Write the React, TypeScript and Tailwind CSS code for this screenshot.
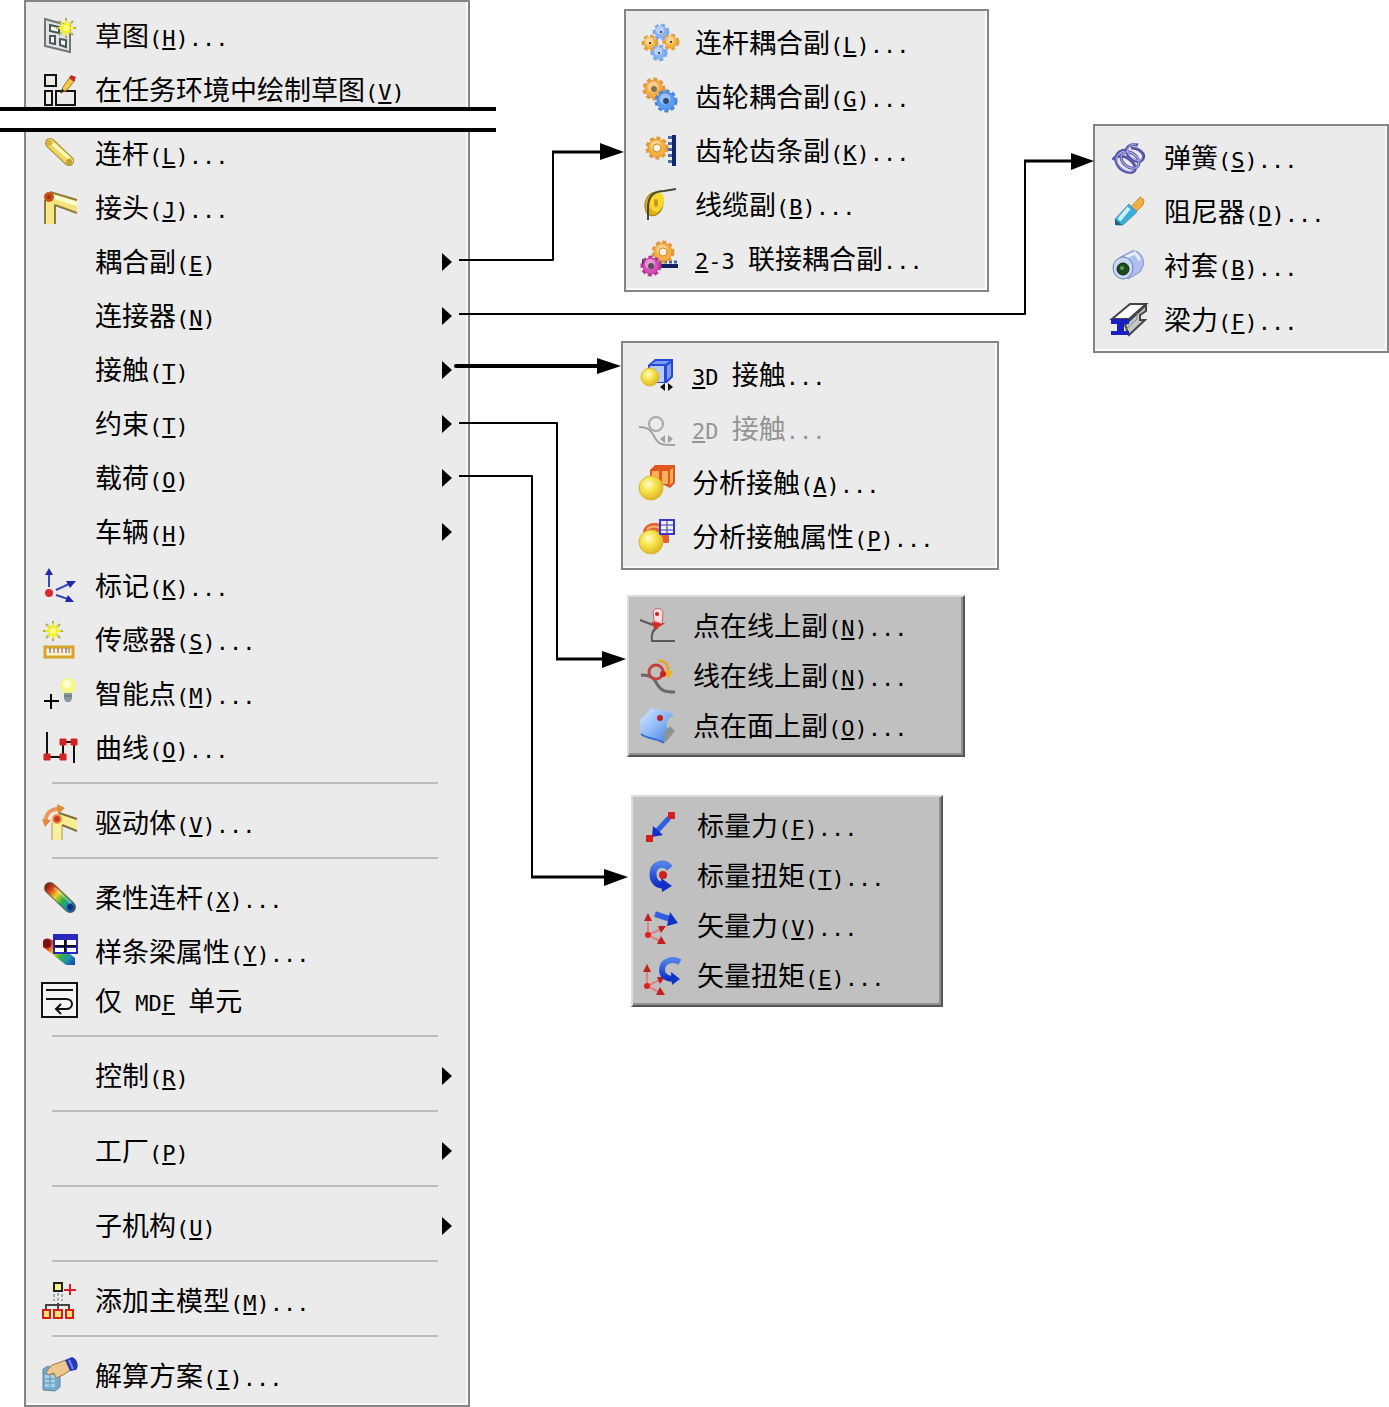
import type { ReactNode } from "react";
import clsx from "clsx";

interface MenuEntry {
  label: string; // "&" marks the access key
  icon?: ReactNode;
  submenu?: boolean;
  disabled?: boolean;
  tight?: boolean;
}

type MenuNode = MenuEntry | "separator";

/* ---------- icon parts ---------- */

const Icon = ({ children }: { children: ReactNode }) => (
  <svg viewBox="0 0 36 36" className="w-9 h-9 overflow-visible" fill="none" aria-hidden="true">
    {children}
  </svg>
);

const Gear = ({ x, y, r, fill, edge }: { x: number; y: number; r: number; fill: string; edge: string }) => (
  <g>
    <circle cx={x} cy={y} r={r - 1} stroke={edge} strokeWidth="3" strokeDasharray="4 2.6" />
    <circle cx={x} cy={y} r={r - 2} fill={fill} stroke={edge} strokeWidth="1" />
    <circle cx={x - 1} cy={y - 2} r={r / 2} fill="#fff" opacity="0.4" />
  </g>
);

const Star = ({ x, y }: { x: number; y: number }) => (
  <g transform={`translate(${x} ${y})`}>
    <path d="M0-10V10M-10 0H10M-7-7L7 7M-7 7L7-7" stroke="#a4a84c" strokeWidth="2" />
    <path d="M0-9L2-4L6-6L4-2L9 0L4 2L6 6L2 4L0 9L-2 4L-6 6L-4 2L-9 0L-4-2L-6-6L-2-4Z" fill="#f4f020" />
    <circle r="3" fill="#fffb90" />
  </g>
);

const Ball = ({ x, y, r }: { x: number; y: number; r: number }) => (
  <circle cx={x} cy={y} r={r} fill="url(#ball)" stroke="#d8b838" strokeWidth="1" />
);

const Axes = () => (
  <g>
    <path d="M4 22V7M4 22L17 16M4 22L16 28" stroke="#e08080" strokeWidth="2" />
    <path d="M4 0L8 8H0ZM22 13L17 20L14 13ZM22 31L13 31L17 23Z" fill="#c02020" />
    <circle cx="4" cy="22" r="3" fill="#e02020" />
  </g>
);

const Gradients = () => (
  <svg className="absolute w-0 h-0" aria-hidden="true">
    <defs>
      <radialGradient id="ball" cx="0.4" cy="0.35" r="0.7">
        <stop offset="0" stopColor="#fffbd0" />
        <stop offset="0.4" stopColor="#f7e650" />
        <stop offset="1" stopColor="#dcb020" />
      </radialGradient>
      <linearGradient id="rainbow" gradientUnits="userSpaceOnUse" x1="4" y1="6" x2="32" y2="30">
        <stop offset="0" stopColor="#8c1010" />
        <stop offset="0.2" stopColor="#e05020" />
        <stop offset="0.38" stopColor="#f0d030" />
        <stop offset="0.6" stopColor="#30b040" />
        <stop offset="0.8" stopColor="#2090b0" />
        <stop offset="1" stopColor="#2040a0" />
      </linearGradient>
      <linearGradient id="sheet" x1="0" y1="0" x2="1" y2="1">
        <stop offset="0" stopColor="#dceaff" />
        <stop offset="0.5" stopColor="#8db8f8" />
        <stop offset="1" stopColor="#3d78d8" />
      </linearGradient>
      <linearGradient id="blueArrow" x1="0" y1="0" x2="0" y2="1">
        <stop offset="0" stopColor="#5080e8" />
        <stop offset="1" stopColor="#1030c8" />
      </linearGradient>
    </defs>
  </svg>
);

/* ---------- icons ---------- */

const icons = {
  sketch: (
    <Icon>
      <path d="M3 1L28 8V34L3 28Z" fill="#dfe3e3" stroke="#6f7678" strokeWidth="2" />
      <path d="M8 7L17 9V15L8 13ZM8 18H13V26L8 25ZM18 21L24 22V29L18 27Z" fill="#f4f6f6" stroke="#4c5456" strokeWidth="2" />
      <Star x={24} y={10} />
    </Icon>
  ),
  sketchTask: (
    <Icon>
      <path d="M3 3H14V14H3ZM3 19H10V33H3ZM14 19H33V33H14Z" stroke="#111" strokeWidth="2" />
      <path d="M19 21L21 15L28 5L33 8L25 18Z" fill="#f0c848" stroke="#b07818" strokeWidth="1" />
      <path d="M27 6L29 3L34 5L32 10Z" fill="#c03020" />
      <path d="M18 21L20 17L23 19Z" fill="#222" />
    </Icon>
  ),
  link: (
    <Icon>
      <path d="M8 7L27 25" stroke="#a08830" strokeWidth="10" strokeLinecap="round" />
      <path d="M8 7L27 25" stroke="#f0d860" strokeWidth="8" strokeLinecap="round" />
      <path d="M11 8L27 22" stroke="#fff8c0" strokeWidth="3" />
      <circle cx="7" cy="7" r="3" fill="#d4b23c" />
      <circle cx="27" cy="26" r="3" fill="#c4a034" />
    </Icon>
  ),
  joint: (
    <Icon>
      <path d="M3 10H13V34H3Z" fill="#f6e88a" />
      <path d="M3 10V34M13 14V34" stroke="#8f7c38" strokeWidth="2" />
      <path d="M8 2L35 10V22L8 13Z" fill="#f6e27a" />
      <path d="M10 6L35 14" stroke="#fffbd0" strokeWidth="4" />
      <path d="M8 2L35 10M13 15L35 23" stroke="#8f7c38" strokeWidth="2" />
      <circle cx="7" cy="7" r="5" fill="#c85020" />
      <circle cx="7" cy="7" r="2" fill="#a83010" />
    </Icon>
  ),
  marker: (
    <Icon>
      <path d="M7 19V5M14 22L27 16M14 27L26 31" stroke="#4048c0" strokeWidth="2" />
      <path d="M7 0L11 7H3ZM34 13L28 20L24 13ZM32 34L23 34L26 27Z" fill="#2028b0" />
      <circle cx="7" cy="25" r="4" fill="#e02828" />
    </Icon>
  ),
  sensor: (
    <Icon>
      <Star x={11} y={9} />
      <path d="M3 25H31V35H3Z" fill="#fff3d0" stroke="#d8a428" strokeWidth="3" />
      <path d="M8 26V31M16 26V31M24 26V31" stroke="#3040b0" strokeWidth="1" />
      <path d="M12 26V31M20 26V31M27 26V31" stroke="#c04040" strokeWidth="1" />
    </Icon>
  ),
  smartPoint: (
    <Icon>
      <path d="M2 25H17M9 18V33" stroke="#000" strokeWidth="2" />
      <circle cx="26" cy="10" r="8" fill="#f6f68a" />
      <circle cx="25" cy="8" r="4" fill="#ffffd0" />
      <path d="M22 17H30V23L28 26H24L22 23Z" fill="#8a98a0" />
      <path d="M22 20H30" stroke="#5c6870" strokeWidth="1" />
    </Icon>
  ),
  curve: (
    <Icon>
      <path d="M5 2V27H21V12H32V33" stroke="#111" strokeWidth="2" />
      <path d="M2 24H8V30H2ZM18 24H24V30H18ZM18 9H24V15H18ZM29 9H35V15H29Z" fill="#d82020" stroke="#d82020" strokeLinejoin="round" />
    </Icon>
  ),
  driver: (
    <Icon>
      <path d="M10 16H20V35H10Z" fill="#f8f0a0" />
      <path d="M10 18V35M20 20V35" stroke="#a89850" strokeWidth="1" />
      <path d="M15 8L35 15V26L14 19Z" fill="#f8ee90" />
      <path d="M17 8L35 14M20 20L35 26" stroke="#80703c" strokeWidth="2" />
      <path d="M4 17C3 9 9 3 18 4" stroke="#e89858" strokeWidth="4" />
      <path d="M0 14L9 15L3 22ZM15 -1L23 3L16 9Z" fill="#e08840" />
      <circle cx="15" cy="14" r="5" fill="#e89050" />
      <circle cx="15" cy="14" r="3" fill="#d03818" />
    </Icon>
  ),
  flexLink: (
    <Icon>
      <path d="M8 8L28 27" stroke="#5c6448" strokeWidth="12" strokeLinecap="round" />
      <path d="M8 8L28 27" stroke="url(#rainbow)" strokeWidth="10" strokeLinecap="round" />
      <path d="M12 8L29 23" stroke="#fff" strokeWidth="2" opacity="0.3" />
      <circle cx="28" cy="27" r="3" fill="#18307c" />
    </Icon>
  ),
  beamProps: (
    <Icon>
      <path d="M1 7C3 3 8 4 13 8L33 24V31H24L1 13Z" fill="url(#rainbow)" />
      <circle cx="5" cy="10" r="4" fill="#801010" />
      <path d="M11 0H36V20H11Z" fill="#2828c0" />
      <path d="M13 6H22V11H13ZM25 6H34V11H25ZM13 14H22V18H13ZM25 14H34V18H25Z" fill="#fff" />
      <path d="M13 12H34M23 6V18" stroke="#111" strokeWidth="2" />
    </Icon>
  ),
  mdf: (
    <Icon>
      <path d="M0 0H35V34H0Z" fill="#f4f4f4" stroke="#111" strokeWidth="2" />
      <path d="M4 7H31M4 16H24C32 16 32 26 24 26H14M19 21L14 26L19 31" stroke="#111" strokeWidth="2" />
    </Icon>
  ),
  addModel: (
    <Icon>
      <path d="M16 10V22M12 11V18M20 11V18" stroke="#666" strokeWidth="1" strokeDasharray="3 2" />
      <path d="M4 27V22H27V27M16 20V27" stroke="#444" strokeWidth="2" />
      <path d="M12 0H20V8H12Z" fill="#f8f080" stroke="#222" strokeWidth="2" />
      <path d="M28 1V12M22 7H34" stroke="#d82020" strokeWidth="2" />
      <path d="M1 27H8V35H1ZM12 27H20V35H12ZM24 27H31V35H24Z" fill="#f8e080" stroke="#d82010" strokeWidth="2" />
    </Icon>
  ),
  solution: (
    <Icon>
      <path d="M1 11L6 8L18 15V29L13 33L1 32Z" fill="#78a8cc" stroke="#5c88a8" strokeWidth="1" />
      <path d="M3 17H13V29H3Z" fill="#a8d0e8" />
      <path d="M3 21H13M3 25H13M8 17V29" stroke="#5890b4" strokeWidth="1" />
      <path d="M4 14L10 7L24 2L30 11L21 17L14 20L12 15L6 17Z" fill="#ecc890" stroke="#9c7848" strokeWidth="1" />
      <path d="M23 2L30 -1C36 1 37 9 34 12L28 13Z" fill="#2838b8" />
      <path d="M27 2L31 11" stroke="#7888e8" strokeWidth="2" />
    </Icon>
  ),
  linkCoupler: (
    <Icon>
      <Gear x={19} y={7} r={8} fill="#88b4f4" edge="#7ca8ec" />
      <Gear x={8} y={18} r={8} fill="#f4b840" edge="#e0a040" />
      <Gear x={29} y={17} r={8} fill="#f4b840" edge="#e0a040" />
      <Gear x={17} y={28} r={8} fill="#88b4f4" edge="#7ca8ec" />
      <path d="M18 6H20V8H18ZM7 17H9V19H7ZM28 16H30V18H28ZM16 27H18V29H16Z" fill="#404860" />
    </Icon>
  ),
  gearCoupler: (
    <Icon>
      <Gear x={12} y={10} r={11} fill="#f4ac44" edge="#e09838" />
      <Gear x={24} y={22} r={11} fill="#5c9cf0" edge="#4888e0" />
      <circle cx="12" cy="10" r="3" fill="#887050" />
      <circle cx="24" cy="22" r="3" fill="#304878" />
    </Icon>
  ),
  rackPinion: (
    <Icon>
      <Gear x={15} y={15} r={11} fill="#f4b040" edge="#e09838" />
      <circle cx="15" cy="15" r="4" fill="#fff4dc" stroke="#d08828" />
      <path d="M30 2H34V33H30Z" fill="#102868" />
      <path d="M28 3V32" stroke="#5068b0" strokeWidth="4" strokeDasharray="3 3" />
    </Icon>
  ),
  cable: (
    <Icon>
      <ellipse cx="12" cy="17" rx="9" ry="12" transform="rotate(15 12 17)" fill="#e0b018" stroke="#a07c10" />
      <ellipse cx="15" cy="15" rx="7" ry="10" transform="rotate(15 15 15)" fill="#f8d830" />
      <ellipse cx="14" cy="16" rx="2" ry="4" fill="#c89818" />
      <path d="M6 33V18C7 8 13 4 22 4L34 2" stroke="#484838" strokeWidth="2" />
    </Icon>
  ),
  coupler23: (
    <Icon>
      <path d="M0 18H14V26H0Z" fill="#202860" />
      <path d="M16 23H36V27H16Z" fill="#102060" />
      <path d="M17 21H36" stroke="#4060a0" strokeWidth="3" strokeDasharray="3 2" />
      <Gear x={21} y={11} r={11} fill="#f4b040" edge="#e09838" />
      <circle cx="21" cy="11" r="4" fill="#fff4dc" stroke="#d08828" />
      <Gear x={9} y={25} r={10} fill="#d850b8" edge="#b83898" />
      <circle cx="9" cy="25" r="3" fill="#585058" />
    </Icon>
  ),
  spring: (
    <Icon>
      <g stroke="#5858a8" strokeWidth="3">
        <path d="M27 5C20 3 14 7 16 13C18 20 29 24 32 19C35 14 28 8 20 8" />
        <ellipse cx="19" cy="20" rx="10" ry="7" transform="rotate(38 19 20)" />
        <path d="M14 10C6 11 3 17 6 24C10 32 21 35 24 30C26 25 18 17 10 16C6 16 3 17 2 20" />
      </g>
      <g stroke="#b4b4f0" strokeWidth="1">
        <path d="M25 4C19 4 15 8 17 13C20 20 28 22 31 19" />
        <path d="M13 11C6 13 4 18 7 24C11 31 20 33 23 30" />
        <ellipse cx="19" cy="20" rx="10" ry="7" transform="rotate(38 19 20)" />
      </g>
    </Icon>
  ),
  damper: (
    <Icon>
      <path d="M20 13L29 3L33 6L32 11L26 17Z" fill="#f0b040" stroke="#b89040" strokeWidth="1" />
      <path d="M18 10L26 18L12 31H5L4 25Z" fill="#38b0dc" stroke="#6098b0" strokeWidth="1" />
      <path d="M18 14L8 26" stroke="#d0f4ff" strokeWidth="4" />
      <path d="M4 25L11 31L4 31Z" fill="#206080" />
    </Icon>
  ),
  bushing: (
    <Icon>
      <path d="M8 10L21 3C28 2 34 9 32 18L29 24L17 31Z" fill="#b0c0f0" stroke="#8090c0" strokeWidth="1" />
      <path d="M15 9L24 5L29 12" stroke="#e8f0ff" strokeWidth="3" />
      <ellipse cx="12" cy="20" rx="10" ry="11" fill="#c8d8f4" stroke="#7080b0" strokeWidth="1" />
      <circle cx="12" cy="21" r="6" fill="#204820" stroke="#102010" />
      <circle cx="11" cy="20" r="2" fill="#58a058" />
    </Icon>
  ),
  beam: (
    <Icon>
      <path d="M1 17L19 2H35L18 17Z" fill="#fff" stroke="#444" strokeWidth="2" />
      <path d="M17 20L35 3V9L29 13V18L34 18L18 33L14 23Z" fill="#c4c8c8" stroke="#444" strokeWidth="2" />
      <path d="M14 28L26 17V11" stroke="#888" strokeWidth="1" />
      <path d="M0 17H18V22H13V29H18V33H0V29H6V22H0Z" fill="#1820c0" />
    </Icon>
  ),
  contact3d: (
    <Icon>
      <path d="M9 8L16 2H34V20L28 26H9Z" fill="#2848d8" />
      <path d="M11 9H25V25H11Z" fill="#b8ccf8" />
      <path d="M12 7L17 4H31L26 7ZM28 9L32 6V19L28 23Z" fill="#7c9cf4" />
      <Ball x={11} y={20} r={9} />
      <path d="M21 30L26 26V34ZM34 30L29 26V34Z" fill="#111" />
    </Icon>
  ),
  contact2d: (
    <Icon>
      <circle cx="17" cy="13" r="7" stroke="#a8a8ac" strokeWidth="2" />
      <path d="M0 16C9 16 12 19 16 27C20 34 24 34 36 34" stroke="#a0a0a4" strokeWidth="2" />
      <path d="M21 28L26 24V32ZM34 28L29 24V32Z" fill="#a0a0a4" />
    </Icon>
  ),
  analysisContact: (
    <Icon>
      <path d="M11 5L16 0H36V18L31 23L25 20H11Z" fill="#e05820" />
      <path d="M13 6H20V20H13ZM23 6H29V19H23ZM31 5L34 3V17L31 20Z" fill="#f8b058" />
      <Ball x={12} y={23} r={12} />
    </Icon>
  ),
  analysisProps: (
    <Icon>
      <path d="M4 12C7 4 14 3 22 5L30 14V24H22L4 18Z" fill="#e46030" />
      <path d="M8 10C12 7 17 7 21 9" stroke="#f8b880" strokeWidth="2" />
      <Ball x={12} y={23} r={12} />
      <path d="M21 1H35V15H21Z" fill="#f0f0ff" stroke="#3838c8" strokeWidth="2" />
      <path d="M28 1V15M21 6H35M21 11H35" stroke="#3838a0" strokeWidth="1" />
    </Icon>
  ),
  pointOnCurve: (
    <Icon>
      <path d="M0 12L13 17M18 19C12 22 11 27 12 33H35" stroke="#585858" strokeWidth="2" />
      <path d="M13 15L22 16L15 20Z" fill="#d82828" stroke="#d82828" strokeWidth="2" />
      <path d="M13 3C16 -1 23 0 23 5L22 16L14 13Z" fill="#f4dce0" stroke="#c06868" strokeWidth="1" />
      <circle cx="17" cy="6" r="2" fill="#c02020" />
    </Icon>
  ),
  curveOnCurve: (
    <Icon>
      <path d="M1 17C11 17 14 20 17 26C21 33 25 34 35 34" stroke="#686868" strokeWidth="3" />
      <circle cx="16" cy="14" r="7" stroke="#c84040" strokeWidth="3" />
      <path d="M18 3C25 2 29 7 28 13" stroke="#e0a840" strokeWidth="3" />
      <path d="M23 13H33L28 21Z" fill="#f0b020" />
      <circle cx="23" cy="16" r="3" fill="#c82020" />
    </Icon>
  ),
  pointOnSurface: (
    <Icon>
      <path d="M0 12L12 0C20 3 26 1 34 7C26 11 25 17 28 21L24 35C18 31 8 32 1 27Z" fill="url(#sheet)" />
      <path d="M24 24L30 18L35 23L25 35Z" fill="#8c9498" />
      <path d="M1 26C9 32 18 30 24 35" stroke="#3870d0" strokeWidth="2" />
      <circle cx="20" cy="10" r="3" fill="#c02020" />
    </Icon>
  ),
  scalarForce: (
    <Icon>
      <path d="M25 10L13 23" stroke="#3060e0" strokeWidth="5" />
      <path d="M9 18L19 27L8 29Z" fill="#1030c8" />
      <path d="M24 4H31V11H24ZM2 27H9V34H2Z" fill="#d02020" />
    </Icon>
  ),
  scalarTorque: (
    <Icon>
      <path d="M26 10C20 3 9 6 9 16C9 23 13 27 19 27" stroke="url(#blueArrow)" strokeWidth="7" />
      <path d="M17 20L28 28L18 34Z" fill="#1030c8" />
      <circle cx="19" cy="17" r="4" fill="#d02020" />
    </Icon>
  ),
  vectorForce: (
    <Icon>
      <g transform="translate(0 5)">
        <Axes />
      </g>
      <path d="M11 6L26 11" stroke="#3060e0" strokeWidth="6" />
      <path d="M26 4L34 15L23 18Z" fill="#1030c8" />
    </Icon>
  ),
  vectorTorque: (
    <Icon>
      <g transform="translate(-1 6)">
        <Axes />
      </g>
      <path d="M36 4C27 -1 18 4 18 12C18 17 22 20 28 21" stroke="url(#blueArrow)" strokeWidth="6" />
      <path d="M27 14L36 21L28 27Z" fill="#1030c8" />
    </Icon>
  ),
};

/* ---------- menu data ---------- */

const sketchItems: MenuNode[] = [
  { label: "草图(&H)...", icon: icons.sketch },
  { label: "在任务环境中绘制草图(&V)", icon: icons.sketchTask },
];

const motionItems: MenuNode[] = [
  { label: "连杆(&L)...", icon: icons.link },
  { label: "接头(&J)...", icon: icons.joint },
  { label: "耦合副(&E)", submenu: true },
  { label: "连接器(&N)", submenu: true },
  { label: "接触(&T)", submenu: true },
  { label: "约束(&T)", submenu: true },
  { label: "载荷(&O)", submenu: true },
  { label: "车辆(&H)", submenu: true },
  { label: "标记(&K)...", icon: icons.marker },
  { label: "传感器(&S)...", icon: icons.sensor },
  { label: "智能点(&M)...", icon: icons.smartPoint },
  { label: "曲线(&O)...", icon: icons.curve },
  "separator",
  { label: "驱动体(&V)...", icon: icons.driver },
  "separator",
  { label: "柔性连杆(&X)...", icon: icons.flexLink },
  { label: "样条梁属性(&Y)...", icon: icons.beamProps },
  { label: "仅 MD&F 单元", icon: icons.mdf, tight: true },
  "separator",
  { label: "控制(&R)", submenu: true },
  "separator",
  { label: "工厂(&P)", submenu: true },
  "separator",
  { label: "子机构(&U)", submenu: true },
  "separator",
  { label: "添加主模型(&M)...", icon: icons.addModel },
  "separator",
  { label: "解算方案(&I)...", icon: icons.solution },
];

const couplerItems: MenuNode[] = [
  { label: "连杆耦合副(&L)...", icon: icons.linkCoupler },
  { label: "齿轮耦合副(&G)...", icon: icons.gearCoupler },
  { label: "齿轮齿条副(&K)...", icon: icons.rackPinion },
  { label: "线缆副(&B)...", icon: icons.cable },
  { label: "&2-3 联接耦合副...", icon: icons.coupler23 },
];

const contactItems: MenuNode[] = [
  { label: "&3D 接触...", icon: icons.contact3d },
  { label: "&2D 接触...", icon: icons.contact2d, disabled: true },
  { label: "分析接触(&A)...", icon: icons.analysisContact },
  { label: "分析接触属性(&P)...", icon: icons.analysisProps },
];

const constraintItems: MenuNode[] = [
  { label: "点在线上副(&N)...", icon: icons.pointOnCurve },
  { label: "线在线上副(&N)...", icon: icons.curveOnCurve },
  { label: "点在面上副(&O)...", icon: icons.pointOnSurface },
];

const loadItems: MenuNode[] = [
  { label: "标量力(&F)...", icon: icons.scalarForce },
  { label: "标量扭矩(&T)...", icon: icons.scalarTorque },
  { label: "矢量力(&V)...", icon: icons.vectorForce },
  { label: "矢量扭矩(&E)...", icon: icons.vectorTorque },
];

const connectorItems: MenuNode[] = [
  { label: "弹簧(&S)...", icon: icons.spring },
  { label: "阻尼器(&D)...", icon: icons.damper },
  { label: "衬套(&B)...", icon: icons.bushing },
  { label: "梁力(&F)...", icon: icons.beam },
];

/* ---------- menu ---------- */

const Latin = ({ text }: { text: string }) => {
  const at = text.indexOf("&");
  if (at < 0) return <span className="text-[22px]">{text}</span>;
  return (
    <span className="text-[22px]">
      {text.slice(0, at)}
      <u className="decoration-2 underline-offset-2">{text[at + 1]}</u>
      {text.slice(at + 2)}
    </span>
  );
};

// Latin runs are set smaller so two of them take about one CJK cell
const Label = ({ text }: { text: string }) => (
  <span className="whitespace-pre pt-1">
    {text.split(/([\x20-\x7e]+)/).map((run, i) => (i % 2 ? <Latin key={i} text={run} /> : run))}
  </span>
);

const MenuItems = ({ items, classic }: { items: MenuNode[]; classic?: boolean }) => (
  <>
    {items.map((item, i) =>
      item === "separator" ? (
        <hr key={i} className="mt-[7px] mb-3 ml-[26px] mr-[30px] border-0 h-[2px] bg-[#bdbdbd]" />
      ) : (
        <button
          key={i}
          type="button"
          disabled={item.disabled}
          className={clsx(
            "w-full flex items-center gap-[17px] pr-4 text-left text-[27px] leading-9",
            classic ? "h-[50px] pl-[11px]" : "h-[54px] pl-4",
            item.tight && "-mt-[5px]",
            item.disabled ? "text-[#949494]" : "text-black"
          )}
        >
          <span className="w-9 h-9 shrink-0">{item.icon}</span>
          <Label text={item.label} />
          {item.submenu && (
            <svg viewBox="0 0 10 18" className="w-[10px] h-[18px] ml-auto" aria-hidden="true">
              <path d="M0 0L10 9L0 18Z" fill="#000" />
            </svg>
          )}
        </button>
      )
    )}
  </>
);

const Menu = ({ items, classic, className }: { items: MenuNode[]; classic?: boolean; className: string }) => (
  <nav
    className={clsx(
      "border-2",
      classic
        ? "bg-[#c0c0c0] border-t-[#dcdcdc] border-l-[#dcdcdc] border-r-[#555] border-b-[#555] shadow-[inset_-2px_-2px_0_#909090] py-1"
        : "bg-[#ebebeb] border-[#858585] shadow-[inset_-2px_-2px_0_#fafafa] pt-[5px] pb-1",
      className
    )}
  >
    <MenuItems items={items} classic={classic} />
  </nav>
);

const Connectors = () => (
  <svg className="absolute inset-0 w-full h-full pointer-events-none" fill="none" aria-hidden="true">
    <g stroke="#000" strokeWidth="2" strokeLinejoin="round">
      <path d="M459 260H553V152" />
      <path d="M459 314H1025V161" />
      <path d="M459 423H557V659" />
      <path d="M459 476H532V877" />
    </g>
    <g stroke="#000" strokeWidth="3">
      <path d="M552 152H602M1024 161H1073M556 659H604M531 877H606" />
    </g>
    <path d="M456 366H600" stroke="#000" strokeWidth="4" strokeLinecap="round" />
    <path
      d="M600 143L624 152L600 160ZM1071 153L1094 161L1071 170ZM597 358L621 366L597 374ZM602 651L626 659L602 668ZM604 869L628 877L604 886Z"
      fill="#000"
    />
  </svg>
);

export default function App() {
  return (
    <main className="relative flex items-start bg-white font-['DejaVu_Sans_Mono','Noto_Sans_CJK_SC',monospace]">
      <Gradients />

      <nav className="ml-6 w-[446px] shrink-0 bg-[#ebebeb] border-2 border-[#858585] shadow-[inset_-2px_-2px_0_#fafafa] pt-[7px] pb-[2px]">
        <MenuItems items={sketchItems} />
        {/* cut through the long menu */}
        <div className="relative -mt-[10px] -mb-[5px] -ml-[26px] -mr-7 h-[25px] bg-white border-y-4 border-black" />
        <MenuItems items={motionItems} />
      </nav>

      <div className="ml-[151px] w-[378px] shrink-0 flex flex-col items-start">
        <Menu items={couplerItems} className="mt-[9px] ml-[3px] w-[365px]" />
        <Menu items={contactItems} className="mt-[49px] w-[378px]" />
        <Menu items={constraintItems} classic className="mt-[25px] ml-[6px] w-[338px]" />
        <Menu items={loadItems} classic className="mt-[38px] ml-[10px] w-[312px]" />
      </div>

      <Menu items={connectorItems} className="mt-[124px] ml-[94px] min-w-[296px]" />

      <Connectors />
    </main>
  );
}
